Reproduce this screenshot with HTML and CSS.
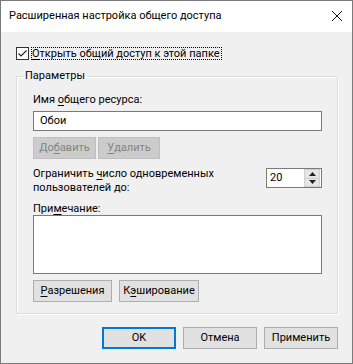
FILE: index.html
```html
<!DOCTYPE html>
<html lang="ru">
<head>
<meta charset="utf-8">
<title>Расширенная настройка общего доступа</title>
<link rel="stylesheet" href="styles.css">
</head>
<body>
<div class="window">
  <div class="titlebar">
    <span class="title">Расширенная настройка общего доступа</span>
    <svg class="close" width="12" height="12" viewBox="0 0 12 12"><path d="M1 1 L11 11 M11 1 L1 11" stroke="#111" stroke-width="1" fill="none"/></svg>
  </div>
  <div class="body">
    <div class="share-check">
      <span class="checkbox"><svg width="11" height="11" viewBox="0 0 11 11"><path d="M1.5 5.5 L4 8 L9.5 2.5" stroke="#222" stroke-width="1.1" fill="none"/></svg></span>
      <span class="focus"><u>О</u>ткрыть общий доступ к этой папке</span>
    </div>
    <fieldset class="group">
      <legend>Параметры</legend>
      <div class="label">Имя <u>о</u>бщего ресурса:</div>
      <div class="textbox">Обои</div>
      <div class="btn-row small-gap">
        <span class="btn disabled w63">До<u>б</u>авить</span>
        <span class="btn disabled w62"><u>У</u>далить</span>
      </div>
      <div class="limit-row">
        <div class="label two-line">Ограничить <u>ч</u>исло одновременных<br>пользователей до:</div>
        <div class="spinner">
          <span class="spin-value">20</span>
          <span class="spin-buttons">
            <span class="spin-btn"><svg width="7" height="4" viewBox="0 0 7 4"><path d="M0 4 L3.5 0 L7 4 Z" fill="#222"/></svg></span>
            <span class="spin-btn"><svg width="7" height="4" viewBox="0 0 7 4"><path d="M0 0 L3.5 4 L7 0 Z" fill="#222"/></svg></span>
          </span>
        </div>
      </div>
      <div class="label note-label">При<u>м</u>ечание:</div>
      <div class="textarea"></div>
      <div class="btn-row">
        <span class="btn w79"><u>Р</u>азрешения</span>
        <span class="btn w80">К<u>э</u>ширование</span>
      </div>
    </fieldset>
    <div class="footer">
      <span class="btn foot default">OK</span>
      <span class="btn foot">Отмена</span>
      <span class="btn foot">Применить</span>
    </div>
  </div>
</div>
</body>
</html>
```
FILE: styles.css
```css
html, body {
  margin: 0;
  padding: 0;
  background: #f0f0f0;
}
body {
  font-family: Roboto, "Liberation Sans", sans-serif;
  font-size: 11px;
  color: #000;
}
u {
  text-decoration-thickness: 1px;
  text-underline-offset: 2px;
}
.window {
  width: 353px;
  height: 364px;
  box-sizing: border-box;
  border: 1px solid #7a7a7a;
  background: #f0f0f0;
  display: flex;
  flex-direction: column;
}
.titlebar {
  height: 31px;
  flex: none;
  background: #fff;
  display: flex;
  align-items: center;
  justify-content: space-between;
  padding: 0 9px 0 8px;
}
.title {
  font-size: 11px;
  line-height: 16px;
  margin-top: -2px;
}
.close {
  display: block;
  margin-top: -2px;
}
.body {
  padding: 13px 14px 0 15px;
}
.share-check {
  display: flex;
  align-items: center;
  height: 17px;
}
.checkbox {
  width: 11px;
  height: 11px;
  border: 1px solid #333;
  background: #fff;
  display: flex;
}
.checkbox svg {
  display: block;
}
.focus {
  margin-left: 2px;
  border: 1px dotted #000;
  line-height: 11px;
  padding: 0 1px 0 0;
}
.group {
  margin: 6px 0 0 0;
  padding: 8px 15px 11px 16px;
  width: 322px;
  box-sizing: border-box;
  border: 1px solid #dcdcdc;
  box-shadow: 1px 1px 0 #fff, inset 1px 1px 0 #fff;
  min-width: 0;
}
.group legend {
  padding: 0 2px;
  margin-left: -10px;
  line-height: 16px;
}
.label {
  line-height: 16px;
}
.textbox {
  margin-top: 3px;
  height: 20px;
  box-sizing: border-box;
  border: 1px solid #7a7a7a;
  background: #fff;
  padding-left: 6px;
  line-height: 18px;
}
.btn-row {
  display: flex;
  gap: 7px;
  margin-top: 6px;
}
.btn-row.small-gap {
  gap: 2px;
}
.btn {
  height: 22px;
  box-sizing: border-box;
  border: 1px solid #adadad;
  background: #e1e1e1;
  display: flex;
  align-items: center;
  justify-content: center;
  line-height: 16px;
}
.btn.disabled {
  background: #cccccc;
  border-color: #bfbfbf;
  color: #838383;
}
.w63 { width: 63px; }
.w62 { width: 62px; }
.w79 { width: 79px; }
.w80 { width: 80px; }
.limit-row {
  margin-top: 8px;
  display: flex;
  justify-content: space-between;
  align-items: flex-start;
}
.two-line {
  line-height: 14px;
}
.spinner {
  margin-top: 1px;
  width: 56px;
  height: 20px;
  box-sizing: border-box;
  border: 1px solid #7a7a7a;
  background: #fff;
  display: flex;
  justify-content: space-between;
}
.spin-value {
  padding-left: 3px;
  line-height: 18px;
}
.spin-buttons {
  width: 16px;
  display: flex;
  flex-direction: column;
  margin: 0 1px 0 0;
}
.spin-btn {
  flex: 1;
  background: #e6e6e6;
  border: 1px solid #cfcfcf;
  display: flex;
  align-items: center;
  justify-content: center;
}
.spin-btn + .spin-btn {
  border-top: none;
}
.note-label {
  margin-top: 7px;
  line-height: 13px;
}
.textarea {
  height: 59px;
  box-sizing: border-box;
  border: 1px solid #7a7a7a;
  background: #fff;
}
.footer {
  display: flex;
  justify-content: flex-end;
  gap: 7px;
  margin-top: 13px;
  padding-right: 0;
}
.foot {
  width: 74px;
}
.btn.default {
  border: 2px solid #0078d7;
}
```
